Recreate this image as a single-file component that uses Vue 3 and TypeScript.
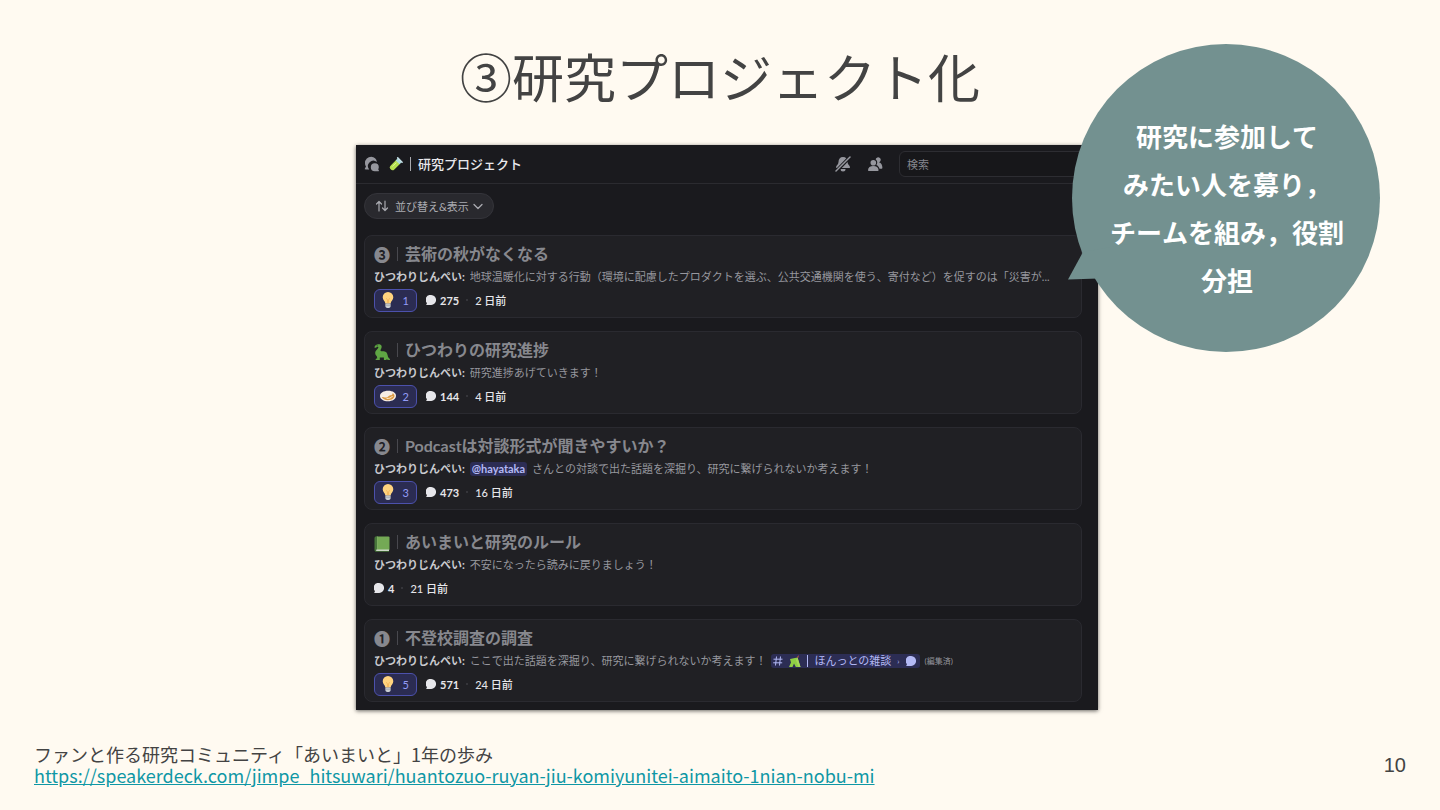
<script setup lang="ts">
type Emoji = 'bulb' | 'plate' | 'dino' | 'book'

interface Post {
  id: number
  mark?: string
  emoji?: Emoji
  title: string
  mention?: string
  body: string
  channel?: string
  edited?: boolean
  reaction?: { emoji: Emoji; count: number }
  comments: number
  age: string
}

const author = 'ひつわりじんぺい:'

const posts: Post[] = [
  {
    id: 1,
    mark: '❸',
    title: '芸術の秋がなくなる',
    body: '地球温暖化に対する行動（環境に配慮したプロダクトを選ぶ、公共交通機関を使う、寄付など）を促すのは「災害が...',
    reaction: { emoji: 'bulb', count: 1 },
    comments: 275,
    age: '2 日前',
  },
  {
    id: 2,
    emoji: 'dino',
    title: 'ひつわりの研究進捗',
    body: '研究進捗あげていきます！',
    reaction: { emoji: 'plate', count: 2 },
    comments: 144,
    age: '4 日前',
  },
  {
    id: 3,
    mark: '❷',
    title: 'Podcastは対談形式が聞きやすいか？',
    mention: '@hayataka',
    body: 'さんとの対談で出た話題を深掘り、研究に繋げられないか考えます！',
    reaction: { emoji: 'bulb', count: 3 },
    comments: 473,
    age: '16 日前',
  },
  {
    id: 4,
    emoji: 'book',
    title: 'あいまいと研究のルール',
    body: '不安になったら読みに戻りましょう！',
    comments: 4,
    age: '21 日前',
  },
  {
    id: 5,
    mark: '❶',
    title: '不登校調査の調査',
    body: 'ここで出た話題を深掘り、研究に繋げられないか考えます！',
    channel: 'ほんっとの雑談',
    edited: true,
    reaction: { emoji: 'bulb', count: 5 },
    comments: 571,
    age: '24 日前',
  },
]
</script>

<template>
  <main class="slide">
    <h1 class="slide-title">③研究プロジェクト化</h1>

    <div class="stage">
      <section class="forum" aria-label="研究プロジェクト">
        <header class="bar">
          <svg class="i16 muted" viewBox="0 0 16 16" aria-hidden="true">
            <path d="M7.200.8A6.200 6.200 0 0 0 1 7c0 1.500.4 2.600 1 3.500L.9 12.600c-.2.5 0 .9.6.9h3.700A5.400 5.400 0 0 1 12.900 6 6.200 6.200 0 0 0 7.200.8Z" />
            <path d="M10.800 7.300a4 4 0 1 0 0 8h3.600c.5 0 .7-.4.500-.8l-.7-1.200c.4-.6.6-1.300.6-2a4 4 0 0 0-4-4Z" />
          </svg>
          <h2 class="bar-title">
            <svg class="i14" viewBox="0 0 14 14" aria-hidden="true">
              <path d="m1.300 8.900 6.300-6.300 3.800 3.800L5.100 12.700c-2.300 1.800-5.500-1.500-3.800-3.800Z" fill="#b3df4f" />
              <path d="m6.700 3.500 2.400-2.400 3.800 3.800-2.400 2.400Z" fill="#a9d8dd" />
              <path d="m8.700.9 4.400 4.400" stroke="#c4dfe6" stroke-width="1.500" stroke-linecap="round" />
              <path d="m3.400 9.500 3.800-3.800" stroke="#e0f59a" stroke-width="1" />
            </svg>
            <i class="rule" aria-hidden="true"></i>
            <span>研究プロジェクト</span>
          </h2>
          <button class="icon-btn" type="button" aria-label="通知">
            <svg class="i16 muted" viewBox="0 0 16 16" aria-hidden="true">
              <path d="M8 1c3 0 4.500 2.100 4.500 4.900 0 2.500 2.500 3.500 2.500 5.300 0 .6-.4.8-.9.8H1.900c-.5 0-.9-.2-.9-.8 0-1.800 2.500-2.800 2.500-5.300C3.500 3.100 5 1 8 1Z" />
              <path d="M5.500 13h5a2.500 2.500 0 0 1-5 0Z" />
              <path d="M1 15.500 15.500.5" stroke="#1a1a1e" stroke-width="3.500" />
              <path d="M1 15 15 1" stroke="#96979e" stroke-width="1.500" stroke-linecap="round" />
            </svg>
          </button>
          <button class="icon-btn" type="button" aria-label="メンバー">
            <svg class="i16 muted" viewBox="0 0 16 16" aria-hidden="true">
              <circle cx="6.300" cy="6.800" r="2.800" />
              <path d="M1 14.200c0-2.800 2.200-4.300 5.300-4.300s5.300 1.500 5.300 4.300c0 .5-.3.8-.8.8h-9c-.5 0-.8-.3-.8-.8Z" />
              <path d="M8.600 3.300A2.600 2.600 0 1 1 12 6.300c2.300.7 3.400 3 3.400 5.500 0 .6-.3.900-.8.9h-2.100c-.5-1.800-1.600-3-3.100-3.700 1.300-1.700 1.100-4.200-.8-5.700Z" />
            </svg>
          </button>
          <input class="search" type="search" placeholder="検索" aria-label="検索" />
        </header>

        <button class="sort" type="button">
          <svg class="i14" viewBox="0 0 14 14" fill="none" stroke="currentColor" stroke-width="1.200" stroke-linecap="round" stroke-linejoin="round" aria-hidden="true">
            <path d="M4 12V2.500M1.500 5 4 2.500 6.500 5M10 2v9.500M7.500 9l2.500 2.500L12.500 9" />
          </svg>
          <span>並び替え&amp;表示</span>
          <svg class="i10" viewBox="0 0 10 10" fill="none" stroke="currentColor" stroke-width="1.300" stroke-linecap="round" stroke-linejoin="round" aria-hidden="true">
            <path d="m1 3.500 4 4 4-4" />
          </svg>
        </button>

        <ul class="list">
          <li v-for="post in posts" :key="post.id" class="card">
            <h3 class="card-title">
              <span v-if="post.mark" class="mark">{{ post.mark }}</span>
              <svg v-else-if="post.emoji === 'dino'" class="i16 low" viewBox="0 0 16 16" aria-hidden="true">
                <path d="M.5 3C.9.8 3.500-.3 5.600.3c2.500.7 2.500 3.100 1.300 5-.6 1-.6 1.800.6 1.900l2.300.1c2.500.2 3.500 1.900 3.900 4.300.3 1.700.9 2.700 2.200 3.400v1c-1.500.1-2.600-.3-3.400-1.100v1.100H9.900v-2.600H5.800V16H1.600c0-1.300.6-1.700 1.700-1.800l-.6-2.100C1.200 10.700.8 8.900 1.600 7.200 2.400 5.500 4.600 4.200 4.300 3.200 4 2.400 3 2.900 2.200 3.500c-.8.5-1.800.5-1.700-.5Z" fill="#5fa644" />
                <circle cx="3.100" cy="1.700" r=".5" fill="#1e3a18" />
              </svg>
              <svg v-else class="i16 low" viewBox="0 0 16 16" aria-hidden="true">
                <path d="M2.500.5h12a1 1 0 0 1 1 1v12a1 1 0 0 1-1 1H2.500Z" fill="#74a955" />
                <path d="M2 13.500h13v1.500H2Z" fill="#cdd8c8" />
                <path d="M2 .5h1.500v12.400C2.500 13 2 13.300 2 14c0 .5.400 1 1 1h12v.8H2.500C1.300 15.800.5 15 .5 14V2C.5 1.200 1.200.5 2 .5Z" fill="#47763a" />
                <path d="M3.500.5v12.500" stroke="#92bf74" stroke-width=".6" />
              </svg>
              <i class="rule" aria-hidden="true"></i>
              <span>{{ post.title }}</span>
            </h3>

            <p class="body">
              <b class="author">{{ author }}</b>
              <a v-if="post.mention" class="mention" href="#">{{ post.mention }}</a>
              <span class="excerpt">{{ post.body }}</span>
              <a v-if="post.channel" class="channel" href="#">
                <svg class="i10" viewBox="0 0 10 10" fill="none" stroke="currentColor" stroke-width="1" aria-hidden="true">
                  <path d="M3.500.5 2.500 9.500M7.500.5l-1 9M.5 3.200h9M.2 6.800h9" />
                </svg>
                <svg class="i12" viewBox="0 0 12 12" aria-hidden="true">
                  <path d="M1 4 8.500 2.500l3 9.500H6.800L5 8.500 3.500 12H0l2-4.500Z" fill="#8fce45" />
                  <path d="m8.500 2.500 3 9.500H9.500L7 5Z" fill="#a8d85b" />
                  <path d="M8 2.500 9.500 0v2.500Z" fill="#d9574a" />
                </svg>
                <i class="rule" aria-hidden="true"></i>
                <span>{{ post.channel }}</span>
                <span class="tiny">›</span>
                <svg class="i10" viewBox="0 0 10 10" fill="currentColor" aria-hidden="true">
                  <path d="M5.200 0A4.800 4.800 0 1 1 5 10H.8c-.6 0-.7-.5-.4-.9l.7-.9A4.800 4.800 0 0 1 5.200 0Z" />
                </svg>
              </a>
              <small v-if="post.edited" class="edited">(編集済)</small>
            </p>

            <div class="meta">
              <button v-if="post.reaction" class="reaction" type="button">
                <svg v-if="post.reaction.emoji === 'bulb'" class="i16" viewBox="0 0 16 16" aria-hidden="true">
                  <path d="M8 0a5.300 5.300 0 0 0-5.300 5.300c0 2.800 2.300 3.500 2.700 6.200h5.200c.4-2.700 2.700-3.400 2.700-6.200A5.300 5.300 0 0 0 8 0Z" fill="#ffd37e" />
                  <path d="M6.300 6.200 7.500 8v3.500M9.700 6.200 8.500 8v3.500" fill="none" stroke="#f0a94b" stroke-width=".6" />
                  <path d="M5.400 11.500h5.200v2.700c0 1-1 1.800-2.600 1.800s-2.600-.8-2.600-1.800Z" fill="#c9cdd2" />
                  <path d="M5.400 13.200h5.200" stroke="#9298a1" stroke-width=".7" />
                </svg>
                <svg v-else class="i16" viewBox="0 0 16 16" aria-hidden="true">
                  <path d="M0 8c0-3 3.500-5.200 8.200-5.200S16 5 16 7.800c0 3.300-3.500 5.500-8 5.500s-8-2.100-8-5.300Z" fill="#f7ede4" />
                  <path d="M1.800 9C2.600 11 5 12.200 8 12.200c3.700 0 6.500-1.800 6.500-4.400 0-1.300-.8-2.300-2-2.600.3 1.600-.8 1.900-2.300 2.100-1.900.3-2 2.200-4.200 2.200-1.600 0-2.600-.5-4.200-.5Z" fill="#dc9a45" />
                  <path d="M6.500 10.300c2 .5 5-.3 6-2.300" fill="none" stroke="#fff0d2" stroke-width="1" />
                </svg>
                <span>{{ post.reaction.count }}</span>
              </button>
              <span class="comments">
                <svg class="i10" viewBox="0 0 10 10" fill="currentColor" aria-hidden="true">
                  <path d="M5.200 0A4.800 4.800 0 1 1 5 10H.8c-.6 0-.7-.5-.4-.9l.7-.9A4.800 4.800 0 0 1 5.200 0Z" />
                </svg>
                {{ post.comments }}
              </span>
              <i class="dot" aria-hidden="true"></i>
              <time>{{ post.age }}</time>
            </div>
          </li>
        </ul>
      </section>

      <aside class="bubble">
        <svg class="bubble-shape" viewBox="0 0 312 308" aria-hidden="true">
          <circle cx="158" cy="154" r="154" />
          <path d="M15 208 0 235.500 30 234.500 60 200Z" />
        </svg>
        <p>研究に参加して<br />みたい人を募り，<br />チームを組み，役割<br />分担</p>
      </aside>
    </div>

    <footer class="foot">
      <p class="source">
        ファンと作る研究コミュニティ「あいまいと」1年の歩み<br />
        <a href="https://speakerdeck.com/jimpe_hitsuwari/huantozuo-ruyan-jiu-komiyunitei-aimaito-1nian-nobu-mi">https://speakerdeck.com/jimpe_hitsuwari/huantozuo-ruyan-jiu-komiyunitei-aimaito-1nian-nobu-mi</a>
      </p>
      <span class="page">10</span>
    </footer>
  </main>
</template>

<style>
body {
  margin: 0;
  background: #fffaf1;
}
</style>

<style scoped>
.slide,
.slide * {
  box-sizing: border-box;
}

.slide {
  display: flex;
  flex-direction: column;
  min-height: 100vh;
  padding: 38px 34px 24px;
  overflow: hidden;
  background: #fffaf1;
  color: #434343;
  font-family: "Noto Sans CJK JP", "Noto Sans", sans-serif;
}

h1,
h2,
h3,
p,
ul {
  margin: 0;
  padding: 0;
}

button,
input {
  font: inherit;
  color: inherit;
}

svg {
  display: block;
  flex: none;
}

.i10 { width: 10px; height: 10px; }
.i12 { width: 12px; height: 12px; }
.i14 { width: 14px; height: 14px; }
.i16 { width: 16px; height: 16px; }
.muted { fill: #96979e; }
.low { margin-top: 4px; }

.slide-title {
  font-size: 52px;
  font-weight: 400;
  line-height: 76px;
  text-align: center;
}

.stage {
  position: relative;
  width: 100%;
  max-width: 742px;
  margin: 31px auto 0;
  left: 7px;
}

.forum {
  padding-bottom: 8px;
  background: #1a1a1e;
  box-shadow: 0 1px 4px rgba(0, 0, 0, 0.6);
  color: #96979e;
  font-family: Lato, "Noto Sans CJK JP", sans-serif;
  font-size: 11px;
}

.bar {
  display: flex;
  align-items: center;
  height: 39px;
  padding: 0 8px;
  border-bottom: 1px solid #2b2b30;
}

.bar-title {
  display: flex;
  flex: 1;
  align-items: center;
  gap: 7px;
  margin-left: 9px;
  color: #e8e8ec;
  font-size: 13px;
  font-weight: 500;
  line-height: 16px;
}

.rule {
  flex: none;
  width: 1px;
  height: 14px;
  background: currentColor;
}

.bar-title .rule {
  background: #a9a9ae;
}

.icon-btn {
  width: 16px;
  height: 16px;
  margin-right: 16px;
  padding: 0;
  border: 0;
  background: none;
}

.search {
  width: 191px;
  height: 26px;
  padding: 0 7px;
  border: 1px solid #2d2d32;
  border-radius: 6px;
  outline: 0;
  background: #17171a;
}

.search::placeholder {
  color: #85868d;
}

.sort {
  display: flex;
  align-items: center;
  gap: 4px;
  height: 26px;
  margin: 9px 8px 16px;
  padding: 0 10px;
  border: 1px solid #34343a;
  border-radius: 13px;
  background: #29292e;
  color: #aaabb1;
}

.sort span {
  margin-left: 2px;
}

.list {
  display: flex;
  flex-direction: column;
  gap: 13px;
  padding: 0 16px 0 8px;
  list-style: none;
}

.card {
  display: flex;
  flex-direction: column;
  gap: 2px;
  padding: 8px 9px 7px;
  border: 1px solid #2a2a30;
  border-radius: 8px;
  background: #202024;
}

.card-title {
  display: flex;
  align-items: center;
  gap: 7px;
  color: #87888e;
  font-size: 16px;
  font-weight: 700;
  line-height: 20px;
}

.card-title .rule {
  background: #48484e;
}

.mark {
  width: 16px;
  font-family: "Noto Sans CJK JP", sans-serif;
}

.body {
  display: flex;
  align-items: center;
  gap: 5px;
  line-height: 22px;
  white-space: nowrap;
}

.author {
  color: #c9cacf;
}

.excerpt {
  overflow: hidden;
  text-overflow: ellipsis;
}

.mention,
.channel {
  border-radius: 3px;
  background: #2c2d54;
  color: #b3b9f5;
  line-height: 14px;
  text-decoration: none;
}

.mention {
  padding: 0 2px;
  font-weight: 700;
}

.channel {
  display: flex;
  align-items: center;
  gap: 6px;
  padding: 0 4px 0 2px;
}

.channel .rule {
  height: 12px;
}

.channel .tiny {
  font-size: 8px;
}

.edited {
  font-size: 8px;
}

.meta {
  display: flex;
  align-items: center;
  height: 20px;
  color: #e6e6ea;
  font-weight: 500;
}

.reaction {
  display: flex;
  align-items: center;
  justify-content: space-between;
  width: 43px;
  height: 23px;
  margin-right: 9px;
  padding: 0 7px 0 5px;
  border: 1px solid #4c51ac;
  border-radius: 6px;
  background: #2b2c52;
  color: #949cf7;
  font-weight: 400;
}

.comments {
  display: flex;
  align-items: center;
  gap: 4px;
  font-weight: 700;
}

.dot {
  width: 2px;
  height: 2px;
  margin: 0 7px;
  border-radius: 1px;
  background: #3c3c42;
}

.bubble {
  position: absolute;
  top: -101px;
  right: -282px;
  display: grid;
  place-items: center;
  width: 312px;
  height: 308px;
  padding: 20px 0 0 6px;
  color: #fff;
  font-size: 26px;
  font-weight: 700;
  line-height: 48px;
  text-align: center;
  white-space: nowrap;
}

.bubble-shape {
  position: absolute;
  inset: 0;
  width: 100%;
  height: 100%;
  fill: #739190;
}

.bubble p {
  position: relative;
  font-kerning: none;
}

.foot {
  display: flex;
  align-items: center;
  justify-content: space-between;
  margin-top: auto;
}

.source {
  font-size: 18px;
  line-height: 21px;
}

.source a {
  color: #0f97a5;
}

.page {
  font-family: "Liberation Sans", Arial, sans-serif;
  font-size: 20px;
}
</style>
